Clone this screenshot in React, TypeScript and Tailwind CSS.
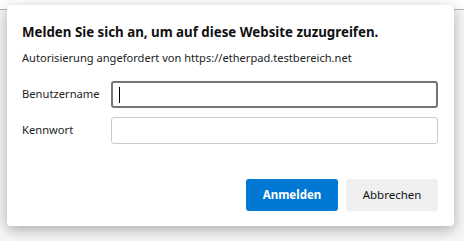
export default function App() {
  return (
    <div className="relative w-[464px] h-[241px] overflow-hidden bg-white" style={{ fontFamily: '"Noto Sans", "Open Sans", sans-serif' }}>
      <div className="h-[10px] border-b border-[#b4b4b4] bg-white" />
      <div className="h-[231px] bg-[#f6f6f6]" />
      <div className="absolute left-[7px] top-[5px] w-[447px] h-[221px] bg-white rounded-[4px] shadow-[0_4px_14px_rgba(0,0,0,0.3)] flex flex-col pl-[15px] pr-[16px]">
        <div className="mt-[17px] h-[20px] leading-[20px] text-[13.3px] font-bold text-[#111]">
          Melden Sie sich an, um auf diese Website zuzugreifen.
        </div>
        <div className="mt-[8px] h-[16px] leading-[16px] text-[11.1px] text-[#222]">
          Autorisierung angefordert von https://etherpad.testbereich.net
        </div>
        <div className="mt-[15px] flex items-center h-[27px]">
          <div className="w-[89px] text-[11.2px] text-[#222]">Benutzername</div>
          <div className="flex-1 h-[27px] border-2 border-[#757575] rounded-[3px] flex items-center pl-[6px]">
            <div className="w-px h-[16px] bg-black" />
          </div>
        </div>
        <div className="mt-[9px] flex items-center h-[27px]">
          <div className="w-[89px] text-[11.2px] text-[#222]">Kennwort</div>
          <div className="flex-1 h-[27px] border border-[#cacaca] rounded-[3px]" />
        </div>
        <div className="mt-[35px] flex justify-end gap-[8px]">
          <button className="w-[92px] h-[32px] rounded-[3px] bg-[#0078d4] text-white text-[11.5px] font-bold">Anmelden</button>
          <button className="w-[92px] h-[32px] rounded-[3px] bg-[#efefef] text-[#111] text-[11.5px]">Abbrechen</button>
        </div>
      </div>
    </div>
  );
}
